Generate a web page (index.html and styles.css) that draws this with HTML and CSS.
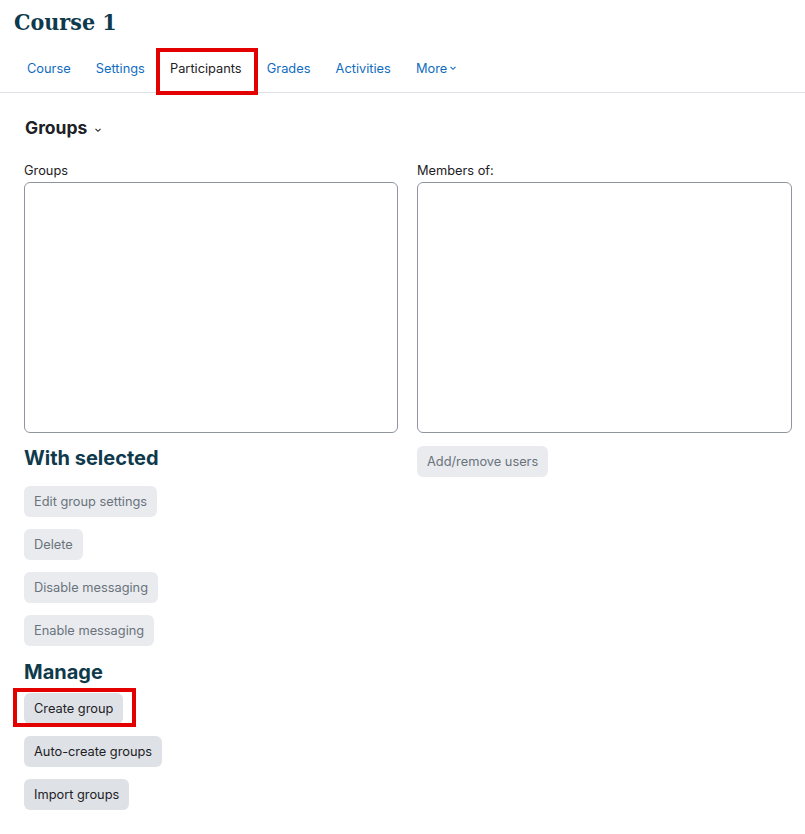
FILE: index.html
```html
<!DOCTYPE html>
<html>

<head>
    <meta http-equiv="Content-Type" content="text/html; charset=utf-8" />
    <title>Course 1: Groups</title>
    <link rel="stylesheet" href="styles.css">
</head>

<body>
    <div class="page-header">
        <h1>Course 1</h1>
        <ul class="tabs">
            <li><a href="javascript:;">Course</a></li>
            <li><a href="javascript:;">Settings</a></li>
            <li><a href="javascript:;" class="active marked">Participants</a></li>
            <li><a href="javascript:;">Grades</a></li>
            <li><a href="javascript:;">Activities</a></li>
            <li><a href="javascript:;">More<svg class="caret" width="8" height="8" viewBox="0 0 8 8"><path d="M1.5 2.8 4 5.3 6.5 2.8" fill="none" stroke="currentColor" stroke-width="1.1"/></svg></a></li>
        </ul>
    </div>

    <div class="content">
        <h2 class="page-title">Groups<svg class="caret" width="8" height="8" viewBox="0 0 8 8"><path d="M1.5 2.8 4 5.3 6.5 2.8" fill="none" stroke="currentColor" stroke-width="1.1"/></svg></h2>

        <div class="cols">
            <div class="col">
                <label for="groups">Groups</label>
                <select id="groups" class="listbox" multiple></select>

                <h3 class="sub first">With selected</h3>
                <button class="btn" disabled>Edit group settings</button>
                <button class="btn" disabled>Delete</button>
                <button class="btn" disabled>Disable messaging</button>
                <button class="btn" disabled>Enable messaging</button>

                <h3 class="sub">Manage</h3>
                <button class="btn marked">Create group</button>
                <button class="btn">Auto-create groups</button>
                <button class="btn">Import groups</button>
            </div>
            <div class="col">
                <label for="members">Members of:</label>
                <select id="members" class="listbox" multiple></select>
                <button class="btn right-btn" disabled>Add/remove users</button>
            </div>
        </div>
    </div>
</body>

</html>
```

FILE: styles.css
```css
* {
    margin: 0;
    padding: 0;
    list-style: none;
    box-sizing: border-box;
}

body {
    font-family: Inter, "Liberation Sans", sans-serif;
    font-size: 12.8px;
    color: #1d2125;
    background: #fff;
}

.page-header {
    padding: 4px 0 0 14px;
    border-bottom: 1px solid #dee2e6;
}

.page-header h1 {
    font-family: "DejaVu Serif Condensed", "DejaVu Serif", serif;
    font-size: 23px;
    line-height: 36px;
    font-weight: bold;
    color: #0f3a4c;
}

.tabs {
    display: flex;
    margin-top: 4px;
}

.tabs a {
    display: flex;
    align-items: center;
    position: relative;
    padding: 0 12.6px;
    height: 48px;
    font-size: 12.8px;
    color: #0f6cbf;
    text-decoration: none;
}

.tabs li:first-child a {
    padding-left: 13px;
}

.tabs a.active {
    color: #1d2125;
}

.caret {
    margin-left: 2px;
}

/* red call-out frames */
.marked {
    position: relative;
}

.marked::after {
    content: '';
    position: absolute;
    border: 4px solid #e20000;
}

.tabs a.marked::after {
    top: 4px;
    left: -1px;
    right: -4px;
    bottom: -3px;
}

.btn.marked::after {
    top: -5px;
    left: -11px;
    right: -13px;
    bottom: -3px;
}

.content {
    padding: 0 13px 0 24px;
}

.page-title {
    display: flex;
    align-items: center;
    margin-top: 24px;
    margin-left: 1px;
    font-size: 17.5px;
    line-height: 22px;
    font-weight: 700;
    color: #1d2125;
}

.page-title .caret {
    margin-left: 7px;
    margin-top: 3px;
}

.cols {
    display: grid;
    grid-template-columns: 374px 1fr;
    column-gap: 19px;
    margin-top: 23px;
}

.col {
    display: flex;
    flex-direction: column;
    align-items: flex-start;
}

.col label {
    line-height: 18px;
    margin-bottom: 2px;
}

.listbox {
    display: block;
    width: 100%;
    height: 251px;
    border: 1px solid #8f959e;
    border-radius: 6px;
    background: #fff;
    outline: none;
}

.sub {
    font-size: 20px;
    line-height: 26px;
    font-weight: 700;
    color: #0f3a4c;
    margin-top: 1px;
    margin-bottom: 8px;
}

.sub.first {
    margin-top: 12px;
    margin-bottom: 15px;
}

.btn {
    font-family: inherit;
    font-size: 12.8px;
    height: 31px;
    padding: 0 10px;
    border: none;
    border-radius: 6px;
    background: #dee2e6;
    color: #1d2125;
    margin-bottom: 12px;
}

.btn:disabled {
    background: #e9ebef;
    color: #6a737b;
}

.right-btn {
    margin-top: 13px;
}
```
